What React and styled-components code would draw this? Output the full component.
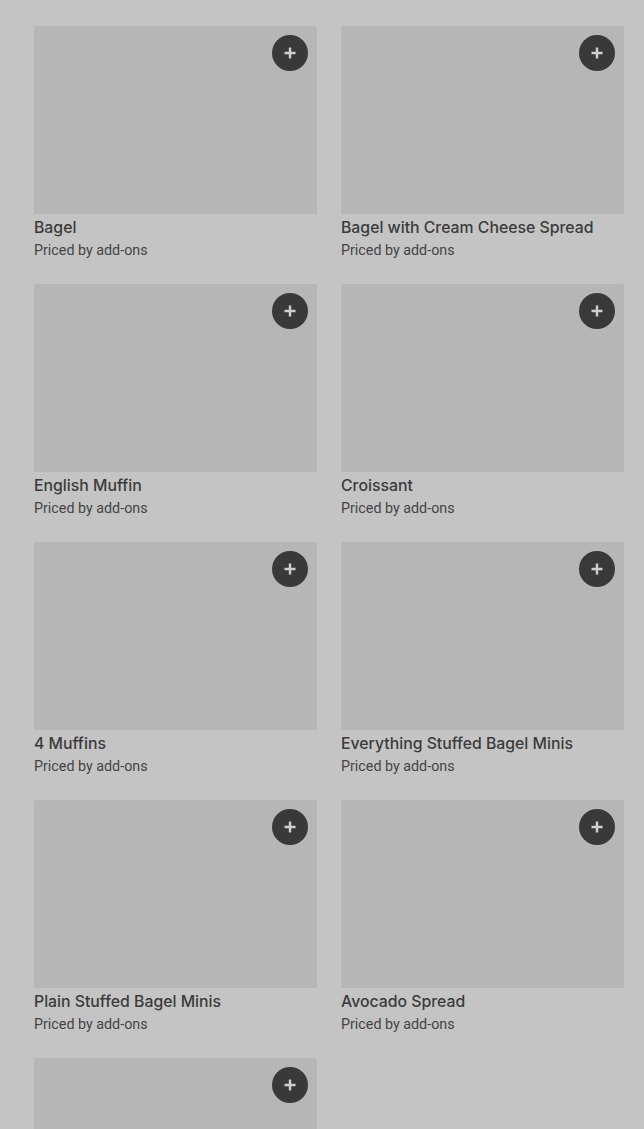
import React from "react";
import styled, { createGlobalStyle } from "styled-components";

const Global = createGlobalStyle`
  html, body { margin: 0; padding: 0; background: #c4c4c4; }
  body { font-family: Roboto, "Noto Sans", sans-serif; }
`;

const Page = styled.div`
  padding: 26px 20px 0 34px;
  height: 1129px;
  box-sizing: border-box;
  overflow: hidden;
`;

const Grid = styled.div`
  display: grid;
  grid-template-columns: 283px 283px;
  column-gap: 24px;
  row-gap: 24px;
`;

const Card = styled.div`
  display: flex;
  flex-direction: column;
`;

const Image = styled.div`
  position: relative;
  height: 188px;
  background: #b6b6b6;
  border-radius: 2px 2px 0 0;
`;

const AddButton = styled.button`
  position: absolute;
  top: 9px;
  right: 9px;
  width: 36px;
  height: 36px;
  border-radius: 50%;
  border: none;
  padding: 0;
  background: #393939;
  display: flex;
  align-items: center;
  justify-content: center;
`;

const Title = styled.div`
  margin-top: 4px;
  font-family: Inter, Roboto, sans-serif;
  font-size: 15.8px;
  line-height: 20px;
  font-weight: 500;
  color: #3b3b3b;
  white-space: nowrap;
`;

const Sub = styled.div`
  margin-top: 2px;
  font-size: 14.3px;
  line-height: 20px;
  color: #444;
`;

const items = [
  "Bagel",
  "Bagel with Cream Cheese Spread",
  "English Muffin",
  "Croissant",
  "4 Muffins",
  "Everything Stuffed Bagel Minis",
  "Plain Stuffed Bagel Minis",
  "Avocado Spread",
  null,
];

const Plus = () => (
  <svg width="14" height="14" viewBox="0 0 14 14">
    <path d="M7 1.5v11M1.5 7h11" stroke="#cfcfcf" strokeWidth="2.4" />
  </svg>
);

export default function App() {
  return (
    <>
      <Global />
      <Page>
        <Grid>
          {items.map((name, i) => (
            <Card key={i}>
              <Image>
                <AddButton aria-label="Add">
                  <Plus />
                </AddButton>
              </Image>
              {name && (
                <>
                  <Title>{name}</Title>
                  <Sub>Priced by add-ons</Sub>
                </>
              )}
            </Card>
          ))}
        </Grid>
      </Page>
    </>
  );
}
